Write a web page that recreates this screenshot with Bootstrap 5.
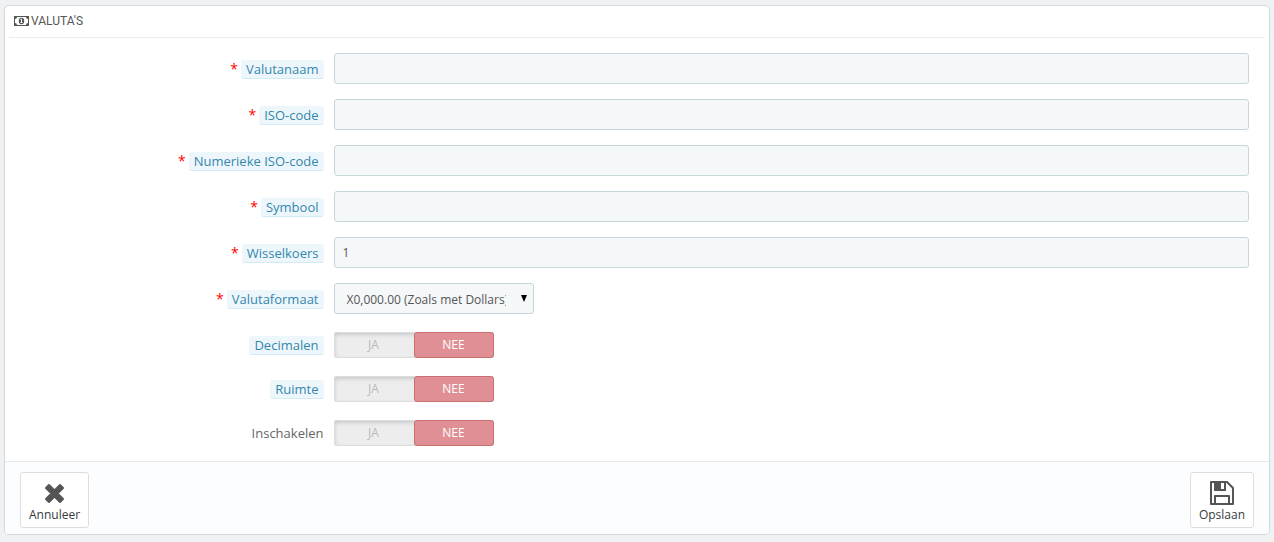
<!DOCTYPE html>
<html lang="nl">
<head>
<meta charset="utf-8">
<meta name="viewport" content="width=device-width, initial-scale=1">
<title>Valuta's</title>
<link href="https://cdn.jsdelivr.net/npm/bootstrap@5.3.0/dist/css/bootstrap.min.css" rel="stylesheet">
<style>
body { background: #eff1f2; font: 12px/17px "Open Sans", sans-serif; color: #555; padding: 5px 4px 7px; }
.panel { background: #fff; border: 1px solid #d3d8db; border-radius: 5px; }
.panel-title { font: 12px/30px "Ubuntu Condensed", Roboto, sans-serif; color: #555; height: 32px; margin: 0 4px 15px; padding: 0 5px 1px; border-bottom: 1px solid #eaedef; text-transform: uppercase; gap: 2px; }
.form-body { padding: 0 20px; }
.form-body .row { --bs-gutter-x: 10px; margin-bottom: 15px; }
.field-label { font-size: 13px; line-height: 18px; padding-top: 7px; color: #666; }
.field-label.required::before { content: "*"; color: red; font-size: 14px; margin-right: 3px; }
.hint { display: inline-block; color: #3586ae; background: #edf7fb; border-bottom: 1px solid #d2eaf5; border-radius: 3px; padding: 0 5px; }
.form-control, .form-select { height: 31px; font-size: 12px; line-height: 17px; padding: 6px 8px; background-color: #f5f8f9; border: 1px solid #c7d6db; border-radius: 3px; color: #555; }
.form-select { width: 200px; padding: 7px 27px 5px 12px; text-overflow: clip; background-image: url("data:image/svg+xml,%3Csvg xmlns='http://www.w3.org/2000/svg' viewBox='0 0 6 7'%3E%3Cpath d='M0 0h6L3 7z'/%3E%3C/svg%3E"); background-size: 6px 7px; background-position: right 6px top 11px; }
.switch { width: 160px; height: 26px; margin-top: 3px; background: #ededed; border-radius: 3px; box-shadow: inset 0 0 0 1px #ddd, inset 0 2px 5px rgba(0,0,0,.2); }
.switch label { line-height: 24px; border: 1px solid transparent; border-radius: 3px; color: #bbb; cursor: pointer; }
.switch .btn-check:checked + label { background: #e08f95; border-color: #ca6f6f; color: #fff; }
.panel-foot { background: #fcfdfe; border-top: 1px solid #e6e9ed; border-radius: 0 0 4px 4px; padding: 10px 15px 6px; }
.action { font-size: 12px; line-height: 17px; color: #363a41; background: #fff; border: 1px solid #ddd; border-radius: 3px; padding: 6px 8px 4px; }
.action svg { display: block; margin: 0 auto 1px; }
</style>
</head>
<body>
<form class="panel">
  <h3 class="panel-title d-flex align-items-center">
    <svg width="15" height="10" viewBox="0 0 15 10" fill="#555" aria-hidden="true"><path fill-rule="evenodd" d="M0 0h15v10H0zM3 1a2 2 0 0 1-2 2v4a2 2 0 0 1 2 2h9a2 2 0 0 1 2-2V3a2 2 0 0 1-2-2z"/><ellipse cx="7.500" cy="5" rx="2.700" ry="3.300"/><path fill="#fff" d="M6.300 3.500 7.300 2.700H8v3.500h.7V7H6.300v-.8H7V4h-.7z"/></svg>
    <span>Valuta's</span>
  </h3>
  <div class="form-body">
    <div class="row"><div class="col-3 text-end"><label class="field-label required" for="name"><span class="hint">Valutanaam</span></label></div><div class="col-9"><input class="form-control" id="name" type="text" required></div></div>
    <div class="row"><div class="col-3 text-end"><label class="field-label required" for="iso"><span class="hint">ISO-code</span></label></div><div class="col-9"><input class="form-control" id="iso" type="text" required></div></div>
    <div class="row"><div class="col-3 text-end"><label class="field-label required" for="isonum"><span class="hint">Numerieke ISO-code</span></label></div><div class="col-9"><input class="form-control" id="isonum" type="text" required></div></div>
    <div class="row"><div class="col-3 text-end"><label class="field-label required" for="sign"><span class="hint">Symbool</span></label></div><div class="col-9"><input class="form-control" id="sign" type="text" required></div></div>
    <div class="row"><div class="col-3 text-end"><label class="field-label required" for="rate"><span class="hint">Wisselkoers</span></label></div><div class="col-9"><input class="form-control" id="rate" type="text" value="1" required></div></div>
    <div class="row"><div class="col-3 text-end"><label class="field-label required" for="format"><span class="hint">Valutaformaat</span></label></div><div class="col-9"><select class="form-select" id="format"><option>X0,000.00 (Zoals met Dollars)</option></select></div></div>
    <div class="row"><div class="col-3 text-end"><div class="field-label" id="dec"><span class="hint">Decimalen</span></div></div><div class="col-9"><div class="switch d-flex text-center position-relative" role="radiogroup" aria-labelledby="dec"><input class="btn-check" type="radio" name="decimals" id="dec1"><label class="w-50" for="dec1">JA</label><input class="btn-check" type="radio" name="decimals" id="dec0" checked><label class="w-50" for="dec0">NEE</label></div></div></div>
    <div class="row"><div class="col-3 text-end"><div class="field-label" id="spc"><span class="hint">Ruimte</span></div></div><div class="col-9"><div class="switch d-flex text-center position-relative" role="radiogroup" aria-labelledby="spc"><input class="btn-check" type="radio" name="spacing" id="spc1"><label class="w-50" for="spc1">JA</label><input class="btn-check" type="radio" name="spacing" id="spc0" checked><label class="w-50" for="spc0">NEE</label></div></div></div>
    <div class="row"><div class="col-3 text-end"><div class="field-label" id="act">Inschakelen</div></div><div class="col-9"><div class="switch d-flex text-center position-relative" role="radiogroup" aria-labelledby="act"><input class="btn-check" type="radio" name="active" id="act1"><label class="w-50" for="act1">JA</label><input class="btn-check" type="radio" name="active" id="act0" checked><label class="w-50" for="act0">NEE</label></div></div></div>
  </div>
  <div class="panel-foot d-flex justify-content-between">
    <button class="action" type="button"><svg width="30" height="26" viewBox="0 0 30 26" fill="#555" stroke="#555" stroke-width="2" stroke-linejoin="round" aria-hidden="true"><path d="M9 6 14.500 11.500 20 6 23 9 17.500 14.500 23 20 20 23 14.500 17.500 9 23 6 20 11.500 14.500 6 9z"/></svg>Annuleer</button>
    <button class="action" type="submit"><svg width="30" height="26" viewBox="0 0 30 26" fill="none" stroke="#555" stroke-width="2" stroke-linejoin="round" aria-hidden="true"><path d="M4 3h16l6 6v16H4z"/><path d="M8 25v-8h14v8"/><path fill="#555" stroke="none" fill-rule="evenodd" d="M7 3h12v9H7zM14 4h3v6h-3z"/></svg>Opslaan</button>
  </div>
</form>
<script src="https://cdn.jsdelivr.net/npm/bootstrap@5.3.0/dist/js/bootstrap.bundle.min.js"></script>
</body>
</html>
